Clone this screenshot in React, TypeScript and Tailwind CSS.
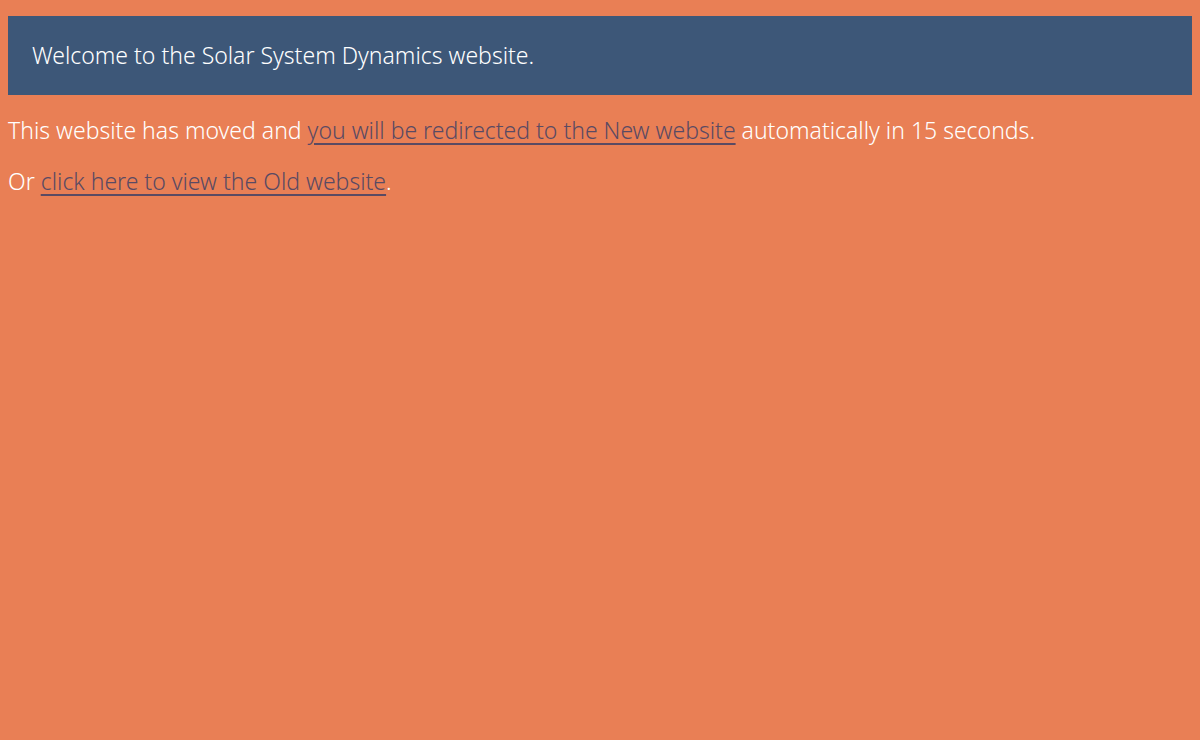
export default function App() {
  return (
    <div className="min-h-[740px] bg-[#e97f55] pt-4 px-2 text-white font-['Open_Sans',sans-serif] font-light">
      <div className="bg-[#3d5778] h-[79px] flex items-center px-6 text-[23px]">
        Welcome to the Solar System Dynamics website.
      </div>
      <p className="mt-[18px] text-[23px] leading-[34px]">
        This website has moved and{" "}
        <a href="#" className="text-[#5a4a63] underline underline-offset-4">you will be redirected to the New website</a>{" "}
        automatically in 15 seconds.
      </p>
      <p className="mt-[17px] text-[23px] leading-[34px]">
        Or <a href="#" className="text-[#5a4a63] underline underline-offset-4">click here to view the Old website</a>.
      </p>
    </div>
  );
}
